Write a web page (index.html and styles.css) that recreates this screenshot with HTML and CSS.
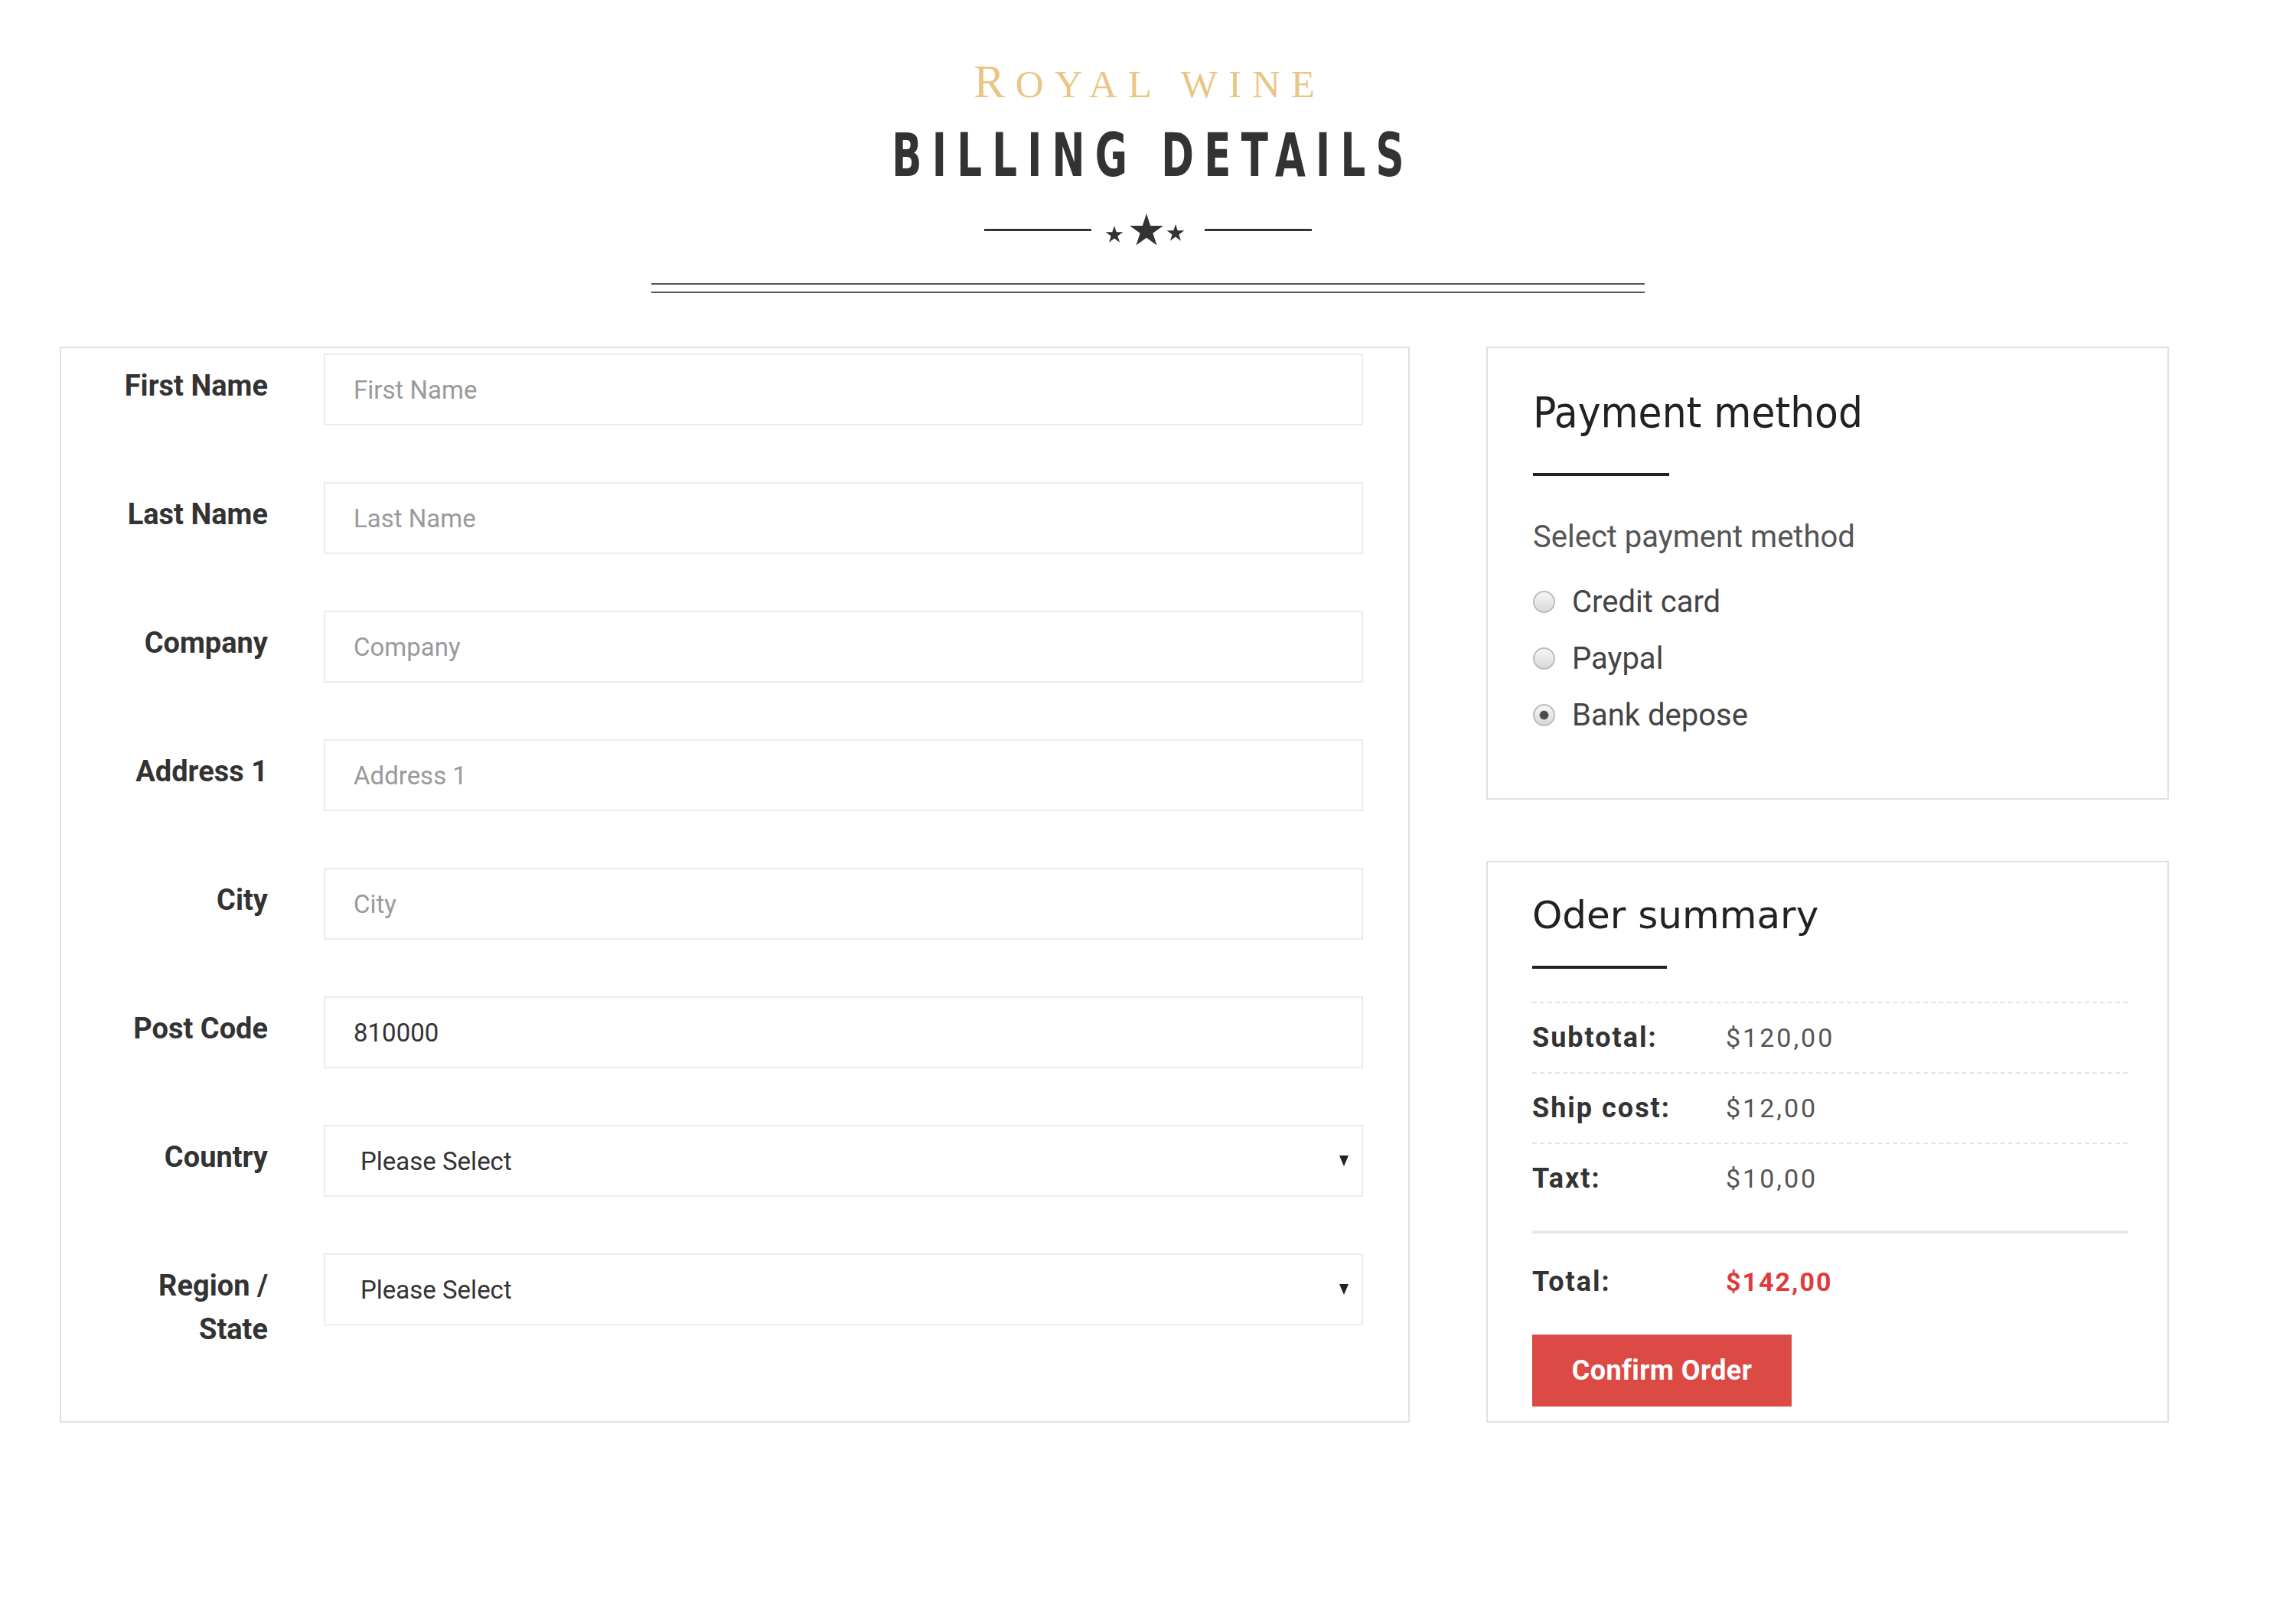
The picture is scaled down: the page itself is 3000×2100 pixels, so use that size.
FILE: index.html
```html
<!DOCTYPE html>
<html lang="en">
<head>
<meta charset="utf-8">
<title>Billing Details - Royal Wine</title>
<link rel="stylesheet" href="styles.css">
</head>
<body>
<header class="hero">
  <div class="brand"><span class="brand-initial">R</span>oyal wine</div>
  <h1 class="title">Billing Details</h1>
  <div class="divider">
    <span class="divider-line"></span>
    <svg class="stars" viewBox="0 0 116 44" width="116" height="44" aria-hidden="true">
      <defs>
        <polygon id="star" points="0,-10 2.245,-3.09 9.511,-3.09 3.633,1.18 5.878,8.09 0,3.82 -5.878,8.09 -3.633,1.18 -9.511,-3.09 -2.245,-3.09"/>
      </defs>
      <use href="#star" fill="#333" transform="translate(14 29) scale(1.2)"/>
      <use href="#star" fill="#333" transform="translate(56 24) scale(2.3)"/>
      <use href="#star" fill="#333" transform="translate(94 27) scale(1.2)"/>
    </svg>
    <span class="divider-line"></span>
  </div>
  <div class="double-rule"></div>
</header>

<main class="checkout">
  <section class="panel billing">
    <form class="form-grid">
      <label class="field-label" for="first-name">First Name</label>
      <input class="field" id="first-name" type="text" placeholder="First Name">

      <label class="field-label" for="last-name">Last Name</label>
      <input class="field" id="last-name" type="text" placeholder="Last Name">

      <label class="field-label" for="company">Company</label>
      <input class="field" id="company" type="text" placeholder="Company">

      <label class="field-label" for="address">Address 1</label>
      <input class="field" id="address" type="text" placeholder="Address 1">

      <label class="field-label" for="city">City</label>
      <input class="field" id="city" type="text" placeholder="City">

      <label class="field-label" for="postcode">Post Code</label>
      <input class="field" id="postcode" type="text" value="810000">

      <label class="field-label" for="country">Country</label>
      <div class="select-wrap">
        <select class="field select" id="country"><option>Please Select</option></select>
      </div>

      <label class="field-label" for="region">Region / State</label>
      <div class="select-wrap">
        <select class="field select" id="region"><option>Please Select</option></select>
      </div>
    </form>
  </section>

  <aside class="side">
    <section class="panel payment">
      <h2 class="payment-title">Payment method</h2>
      <div class="title-bar"></div>
      <p class="payment-lead">Select payment method</p>
      <div class="radio-list">
        <label class="radio-row"><input class="radio" type="radio" name="pay"><span>Credit card</span></label>
        <label class="radio-row"><input class="radio" type="radio" name="pay"><span>Paypal</span></label>
        <label class="radio-row"><input class="radio" type="radio" name="pay" checked><span>Bank depose</span></label>
      </div>
    </section>

    <section class="panel summary">
      <h2 class="summary-title">Oder summary</h2>
      <div class="title-bar title-bar-summary"></div>
      <div class="summary-rows">
        <div class="summary-row"><span class="sum-label">Subtotal:</span><span class="sum-value">$120,00</span></div>
        <div class="summary-row"><span class="sum-label">Ship cost:</span><span class="sum-value">$12,00</span></div>
        <div class="summary-row"><span class="sum-label">Taxt:</span><span class="sum-value">$10,00</span></div>
      </div>
      <div class="total-row"><span class="sum-label">Total:</span><span class="sum-value total-value">$142,00</span></div>
      <button class="btn-confirm" type="button">Confirm Order</button>
    </section>
  </aside>
</main>
</body>
</html>
```

FILE: styles.css
```css
* {
  box-sizing: border-box;
}

body {
  margin: 0;
  background: #fff;
  color: #333;
  font-family: Roboto, "Liberation Sans", sans-serif;
}

/* ---------- Header ---------- */
.hero {
  display: flex;
  flex-direction: column;
  align-items: center;
  padding-top: 77px;
}

.brand {
  font-family: "Liberation Serif", serif;
  font-size: 51px;
  line-height: 60px;
  text-transform: uppercase;
  letter-spacing: 14px;
  padding-left: 4px;
  color: #eac585;
}

.brand-initial {
  font-size: 61px;
}

.title {
  margin: 24px 0 0;
  font-family: "DejaVu Sans", sans-serif;
  font-weight: 700;
  font-size: 78px;
  line-height: 78px;
  letter-spacing: 20px;
  padding-left: 20px;
  text-transform: uppercase;
  white-space: nowrap;
  color: #333;
  transform: scaleX(0.66);
}

.divider {
  display: flex;
  align-items: center;
  gap: 16px;
  margin-top: 36px;
}

.divider-line {
  display: block;
  width: 140px;
  height: 3px;
  background: #333;
}

.stars {
  display: block;
}

.double-rule {
  width: 1298px;
  height: 13px;
  margin-top: 48px;
  border-top: 2px solid #555;
  border-bottom: 2px solid #555;
}

/* ---------- Layout ---------- */
.checkout {
  display: grid;
  grid-template-columns: 1764px 892px;
  column-gap: 100px;
  margin: 70px 0 0 78px;
}

.panel {
  border: 2px solid #e1e1e1;
  background: #fff;
}

/* ---------- Billing form ---------- */
.billing {
  padding: 7px 59px 91px 60px;
}

.form-grid {
  display: grid;
  grid-template-columns: 210px 1358px;
  column-gap: 73px;
  row-gap: 74px;
  align-items: start;
}

.field-label {
  text-align: right;
  font-weight: 700;
  font-size: 38px;
  line-height: 57px;
  padding-top: 14px;
  color: #333;
}

.field {
  display: block;
  width: 100%;
  height: 94px;
  margin: 0;
  padding: 0 37px;
  border: 2px solid #ececec;
  border-radius: 0;
  background: #fff;
  color: #333;
  font-family: Roboto, "Liberation Sans", sans-serif;
  font-size: 33px;
  outline: none;
}

.field::placeholder {
  color: #9a9a9a;
}

.select-wrap {
  position: relative;
}

.select {
  appearance: none;
  -webkit-appearance: none;
  padding-left: 46px;
}

.select-wrap::after {
  content: "";
  position: absolute;
  right: 19px;
  top: 40px;
  border-left: 6px solid transparent;
  border-right: 6px solid transparent;
  border-top: 14px solid #222;
  pointer-events: none;
}

/* ---------- Side column ---------- */
.side {
  display: flex;
  flex-direction: column;
  gap: 80px;
}

.title-bar {
  width: 178px;
  height: 4px;
  background: #222;
  margin-top: 51px;
}

.payment {
  padding: 56px 52px 72px 59px;
}

.payment-title {
  margin: 0;
  font-family: "DejaVu Sans Condensed", "DejaVu Sans", sans-serif;
  font-stretch: semi-condensed;
  font-weight: 400;
  font-size: 56px;
  line-height: 56px;
  color: #222;
}

.payment-lead {
  margin: 58px 0 0;
  font-size: 40px;
  line-height: 44px;
  color: #555;
}

.radio-list {
  display: flex;
  flex-direction: column;
  margin-top: 25px;
}

.radio-row {
  display: flex;
  align-items: center;
  gap: 22px;
  height: 74px;
  font-size: 40px;
  color: #444;
}

.radio {
  appearance: none;
  -webkit-appearance: none;
  flex: none;
  width: 29px;
  height: 29px;
  margin: 0;
  border-radius: 50%;
  border: 2px solid #bdbdbd;
  background: linear-gradient(#f6f6f6, #d9d9d9);
}

.radio:checked {
  background:
    radial-gradient(circle, #4a4a4a 0 5px, rgba(74, 74, 74, 0) 6.5px),
    linear-gradient(#f6f6f6, #d9d9d9);
}

/* ---------- Summary ---------- */
.summary {
  flex: 1;
  display: flex;
  flex-direction: column;
  align-items: flex-start;
  padding: 44px 52px 19px 58px;
}

.summary-title {
  margin: 0;
  font-family: "DejaVu Sans", sans-serif;
  font-weight: 400;
  font-size: 50px;
  line-height: 50px;
  color: #222;
}

.title-bar-summary {
  width: 176px;
  margin-top: 41px;
}

.summary-rows {
  align-self: stretch;
  margin-top: 43px;
}

.summary-row {
  display: flex;
  align-items: center;
  height: 92px;
  border-top: 2px dashed #e3e3e3;
}

.sum-label {
  width: 253px;
  font-weight: 700;
  font-size: 36px;
  letter-spacing: 2px;
  color: #333;
}

.sum-value {
  font-size: 34px;
  letter-spacing: 3px;
  color: #555;
}

.total-row {
  align-self: stretch;
  display: flex;
  align-items: center;
  height: 130px;
  margin-top: 23px;
  border-top: 4px solid #e8e8e8;
}

.total-value {
  font-weight: 700;
  letter-spacing: 2px;
  color: #e03b3b;
}

.btn-confirm {
  width: 339px;
  height: 94px;
  margin-top: 6px;
  border: none;
  border-radius: 0;
  background: #dc4a45;
  color: #fff;
  font-family: Roboto, "Liberation Sans", sans-serif;
  font-weight: 700;
  font-size: 36px;
  letter-spacing: 0.4px;
  cursor: pointer;
}
```
